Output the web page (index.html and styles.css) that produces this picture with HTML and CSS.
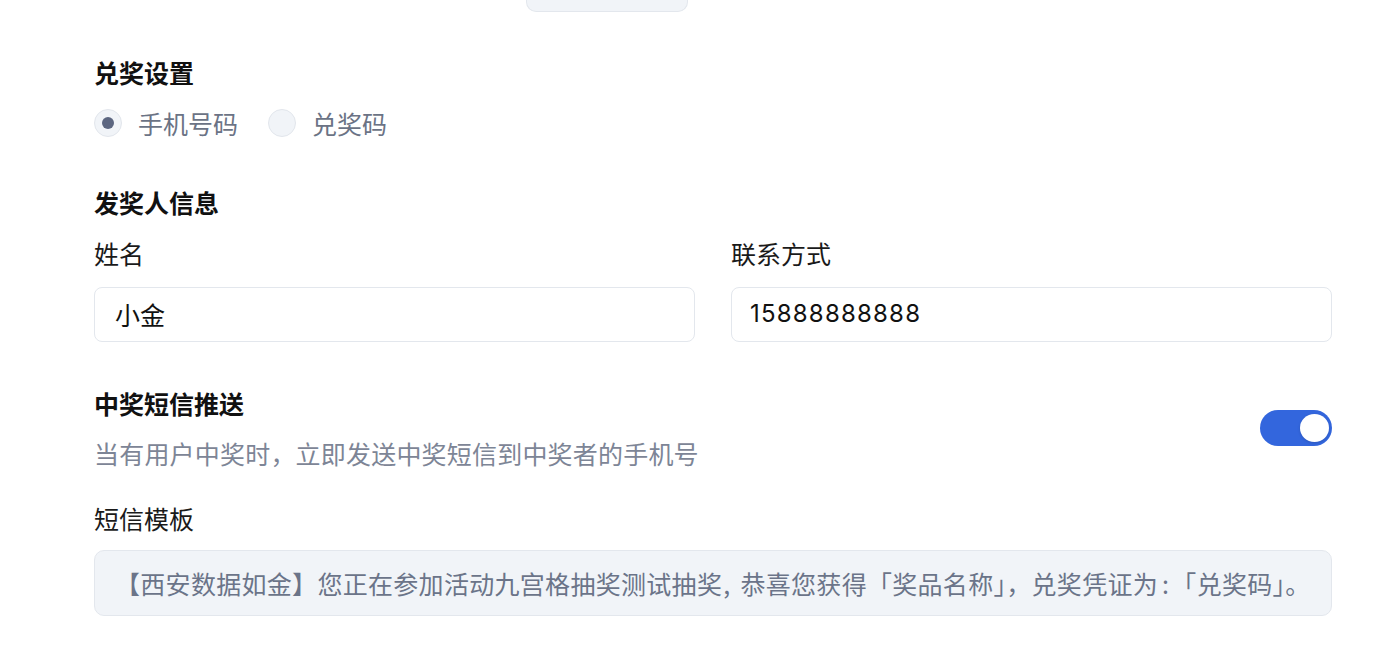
FILE: index.html
```html
<!DOCTYPE html>
<html lang="zh-CN">
<head>
<meta charset="utf-8">
<title>兑奖设置</title>
<link rel="stylesheet" href="styles.css">
</head>
<body>
<div class="page">
  <div class="top-tab"></div>

  <h2 class="section-title first">兑奖设置</h2>
  <div class="radio-group">
    <label class="radio checked"><span class="dot"></span><span class="radio-text">手机号码</span></label>
    <label class="radio"><span class="dot"></span><span class="radio-text">兑奖码</span></label>
  </div>

  <h2 class="section-title">发奖人信息</h2>
  <div class="field-row">
    <div class="field">
      <div class="field-label">姓名</div>
      <div class="input">小金</div>
    </div>
    <div class="field">
      <div class="field-label">联系方式</div>
      <div class="input num">15888888888</div>
    </div>
  </div>

  <div class="sms-row">
    <div class="sms-info">
      <h2 class="section-title flat">中奖短信推送</h2>
      <div class="desc">当有用户中奖时，立即发送中奖短信到中奖者的手机号</div>
    </div>
    <div class="switch on"><span class="knob"></span></div>
  </div>

  <div class="field-label tpl-label">短信模板</div>
  <div class="template">【西安数据如金】您正在参加活动九宫格抽奖测试抽奖<span class="half-comma">,</span>恭喜您获得「奖品名称」，兑奖凭证为<span class="half-colon">:</span>「兑奖码」。</div>
</div>
</body>
</html>
```

FILE: styles.css
```css
* { box-sizing: border-box; }
html, body { margin: 0; padding: 0; background: #ffffff; }
body {
  font-family: "Noto Sans CJK SC", "Noto Sans", sans-serif;
  font-size: 25px;
  color: #1a1a1a;
}
.page {
  width: 1238px;
  margin-left: 94px;
}
.top-tab {
  width: 162px;
  height: 12px;
  margin-left: 432px;
  background: #f1f4f8;
  border: 1px solid #e3e7ed;
  border-top: none;
  border-radius: 0 0 10px 10px;
}
.section-title {
  margin: 43px 0 0 0;
  font-size: 25px;
  line-height: 36px;
  font-weight: 700;
  color: #111111;
}
.section-title.first { margin-top: 42px; }
.section-title.flat { margin-top: 0; }

.radio-group {
  display: flex;
  align-items: center;
  gap: 30px;
  margin-top: 15px;
  height: 36px;
}
.radio {
  display: flex;
  align-items: center;
  gap: 16px;
  color: #6b7385;
  line-height: 36px;
}
.dot {
  width: 28px;
  height: 28px;
  border-radius: 50%;
  background: #f1f4f8;
  border: 1px solid #e2e6ec;
  display: flex;
  align-items: center;
  justify-content: center;
}
.radio.checked .dot::after {
  content: "";
  width: 12px;
  height: 12px;
  border-radius: 50%;
  background: #5c6680;
}

.field-row {
  display: grid;
  grid-template-columns: 1fr 1fr;
  column-gap: 36px;
  margin-top: 15px;
}
.field-label {
  line-height: 36px;
  color: #1a1a1a;
}
.input {
  margin-top: 16px;
  height: 55px;
  border: 1px solid #e3e7ed;
  border-radius: 8px;
  padding: 0 20px;
  display: flex;
  align-items: center;
  color: #111111;
  background: #ffffff;
  padding-bottom: 2px;
}
.input.num {
  font-family: "Inter", "Noto Sans", sans-serif;
  font-size: 24px;
  letter-spacing: 1.2px;
  padding-left: 18px;
}

.sms-row {
  display: flex;
  align-items: center;
  justify-content: space-between;
  margin-top: 43px;
}
.desc {
  margin-top: 14px;
  line-height: 36px;
  color: #7d8596;
  letter-spacing: 0.2px;
}
.switch {
  width: 72px;
  height: 36px;
  border-radius: 18px;
  background: #3366dd;
  position: relative;
}
.knob {
  position: absolute;
  top: 4px;
  right: 3px;
  width: 29px;
  height: 28px;
  border-radius: 50%;
  background: #ffffff;
  box-shadow: 0 1px 3px rgba(0, 0, 0, 0.15);
}

.tpl-label { margin-top: 29px; }
.template {
  margin-top: 14px;
  height: 66px;
  background: #f1f4f8;
  border: 1px solid #e3e7ed;
  border-radius: 10px;
  padding: 0 20px;
  display: flex;
  align-items: center;
  color: #6b7489;
  white-space: nowrap;
  letter-spacing: 0.3px;
}
.half-comma { margin-left: 1px; margin-right: 10px; }
.half-colon { margin-left: 4px; margin-right: 2px; }
```
